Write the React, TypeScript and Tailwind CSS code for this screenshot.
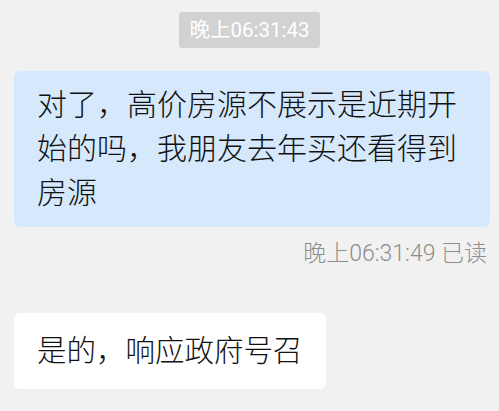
export default function App() {
  const font = { fontFamily: 'Roboto, "Noto Sans CJK SC", sans-serif' }

  return (
    <div className="w-[499px] h-[411px] bg-[#f1f1f1] overflow-hidden" style={font}>
      {/* time pill */}
      <div className="flex justify-center pt-[12px]">
        <div className="h-[36px] px-[10px] rounded-[3px] bg-[#d2d2d2] text-white text-[20.5px] leading-[36px]">
          晚上06:31:43
        </div>
      </div>

      {/* sent message */}
      <div className="mt-[23px] mx-[14px] w-[476px] rounded-[6px] bg-[#d5e8fc] px-[23px] py-[12px] text-[#111] text-[30px] leading-[44px] font-light">
        对了，高价房源不展示是近期开始的吗，我朋友去年买还看得到房源
      </div>
      <div className="flex justify-end pr-[12px] mt-[12px] text-[#8e8e8e] text-[23px] leading-[30px] font-light">
        晚上06:31:49 已读
      </div>

      {/* received message */}
      <div className="mt-[44px] mx-[14px]">
        <div className="inline-block rounded-[6px] bg-white px-[23px] py-[16px] text-[#111] text-[29.5px] leading-[44px] font-light">
          是的，响应政府号召
        </div>
      </div>
    </div>
  )
}
